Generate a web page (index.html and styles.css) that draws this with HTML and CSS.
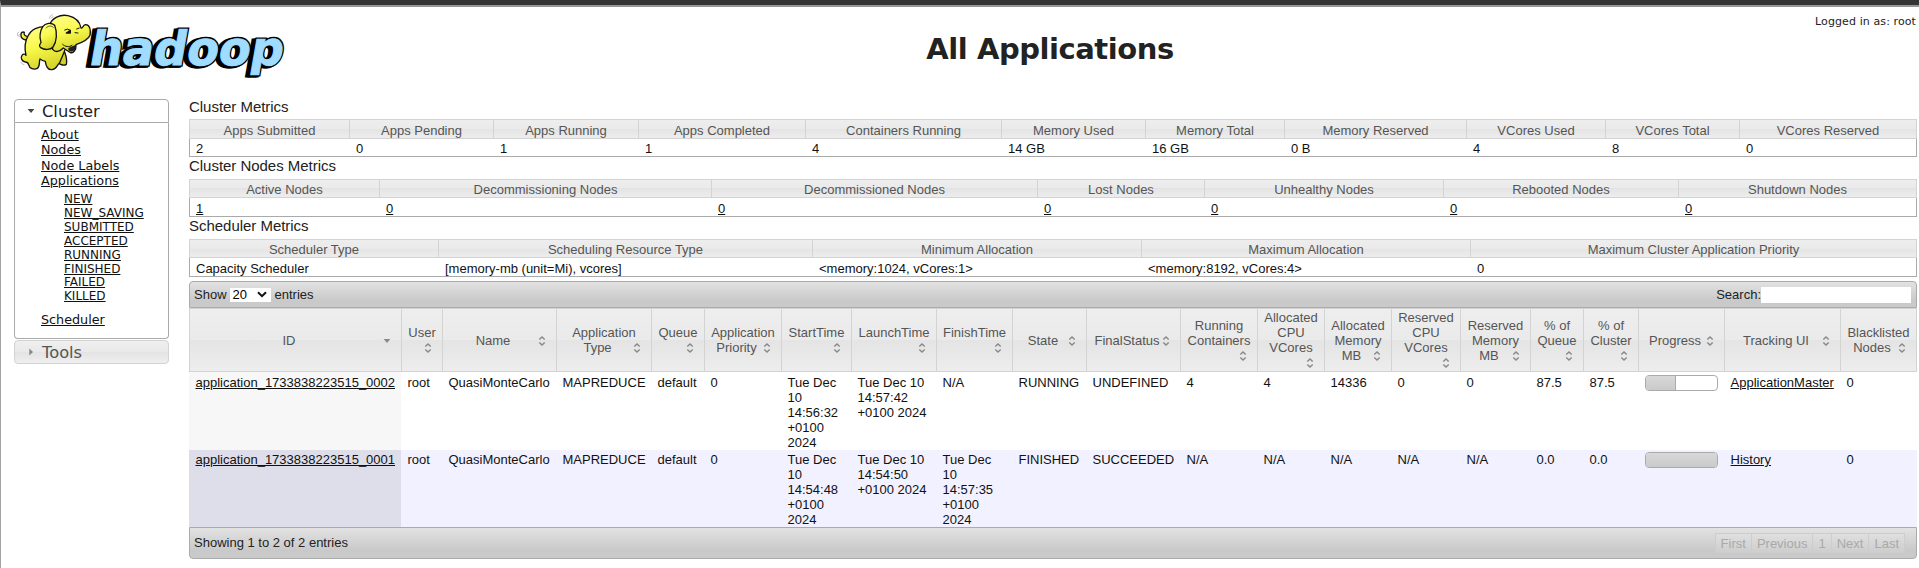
FILE: index.html
```html
<!DOCTYPE html>
<html lang="en">
<head>
<meta charset="utf-8">
<title>All Applications</title>
<link rel="stylesheet" href="styles.css">
</head>
<body>
<svg class="defs" width="0" height="0" aria-hidden="true">
  <symbol id="sort-both" viewBox="0 0 16 16"><path d="M5.3 6.5 8 3.9l2.7 2.6M5.3 9.5 8 12.1l2.7-2.6" fill="none" stroke="#888" stroke-width="1.4"/></symbol>
  <symbol id="sort-desc" viewBox="0 0 16 16"><path d="M4.7 6h6.6L8 10z" fill="#888"/></symbol>
</svg>
<div class="page">
<header class="header">
  <svg class="logo" viewBox="30 30 840 216" width="280" height="72" role="img" aria-label="Hadoop">
    <defs>
      <linearGradient id="skin" x1="0" y1="0" x2="0.3" y2="1"><stop offset="0" stop-color="#ffff8c"/><stop offset=".55" stop-color="#f8f84c"/><stop offset="1" stop-color="#d8d62c"/></linearGradient>
    </defs>
    <g class="wordmark" transform="translate(263 196) skewX(-10)">
      <text class="wm-shadow" x="-11" y="3" textLength="582" lengthAdjust="spacingAndGlyphs">hadoop</text>
      <text class="wm-shadow" x="-5" y="1" textLength="582" lengthAdjust="spacingAndGlyphs">hadoop</text>
      <text class="wm-shadow" x="0" y="0" textLength="582" lengthAdjust="spacingAndGlyphs">hadoop</text>
      <text class="wm-face" x="0" y="0" textLength="582" lengthAdjust="spacingAndGlyphs">hadoop</text>
    </g>
    <g fill="url(#skin)" stroke="#111" stroke-width="4" stroke-linejoin="round" stroke-linecap="round">
      <path d="M80 120C70 120 61 113 63 104C62 98 68 94 73 97C70 104 75 108 84 110Z"/>
      <path d="M170 185C178 194 192 198 199 193C202 182 199 170 194 156L165 160Z" fill="#d2cf28"/>
      <path d="M84 108C93 88 115 78 140 80L198 140C192 160 184 176 178 190C170 196 169 208 156 209C144 210 138 200 136 184C130 183 124 180 120 177C116 188 121 200 112 205C102 210 88 206 86 194C84 188 82 186 76 186C66 184 60 174 66 166C70 161 75 162 78 166C74 148 74 125 84 108Z"/>
      <path d="M148 76C156 54 180 42 204 47C226 52 240 66 243 84C250 86 246 77 256 74C270 73 273 92 270 106C264 121 246 128 228 134C229 150 220 162 210 157C203 154 198 148 190 144C178 156 166 158 158 148Z"/>
      <path d="M128 80C120 94 118 112 123 128C118 134 117 139 122 143C134 151 152 150 159 141C171 124 172 98 164 76C154 66 136 69 128 80Z"/>
      <path d="M207 144L227 136C228 150 217 158 207 151Z" fill="#222" stroke-width="2"/>
      <path d="M188 133C195 140 207 143 216 136M194 90Q202 84 210 90M230 87L238 84M225 98L234 99" fill="none" stroke-width="3"/>
      <path d="M199 99L211 91V99Z" fill="#111"/>
      <path d="M138 84C144 77 154 76 160 82" fill="none" stroke-width="2"/>
      <path d="M148 54Q150 46 157 44M153 55Q155 51 159 50M52 107Q50 100 56 96M57 111Q55 106 58 103M62 187Q66 193 72 194" fill="none" stroke="#999" stroke-width="2"/>
    </g>
  </svg>
  <h1 class="title">All Applications</h1>
  <div class="user">Logged in as: root</div>
</header>
<div class="columns">
<nav class="sidebar">
  <h3 class="acc acc-open"><svg width="16" height="16" viewBox="0 0 16 16"><path d="M4.6 6h6.8L8 10z" fill="#454545"/></svg>Cluster</h3>
  <div class="panel">
    <ul class="links">
      <li><a>About</a></li><li><a>Nodes</a></li><li><a>Node Labels</a></li>
      <li><a>Applications</a>
        <ul class="sublinks">
          <li><a>NEW</a></li><li><a>NEW_SAVING</a></li><li><a>SUBMITTED</a></li><li><a>ACCEPTED</a></li><li><a>RUNNING</a></li><li><a>FINISHED</a></li><li><a>FAILED</a></li><li><a>KILLED</a></li>
        </ul>
      </li>
      <li><a>Scheduler</a></li>
    </ul>
  </div>
  <h3 class="acc acc-closed"><svg width="16" height="16" viewBox="0 0 16 16"><path d="M6.3 4.6v6.8L10 8z" fill="#888"/></svg>Tools</h3>
</nav>
<main class="content">
  <h2 class="caption caption-first">Cluster Metrics</h2>
  <table class="metrics metrics-first">
    <colgroup><col style="width:160px"><col style="width:144px"><col style="width:145px"><col style="width:167px"><col style="width:196px"><col style="width:144px"><col style="width:139px"><col style="width:182px"><col style="width:139px"><col style="width:134px"><col style="width:178px"></colgroup>
    <thead><tr><th>Apps Submitted</th><th>Apps Pending</th><th>Apps Running</th><th>Apps Completed</th><th>Containers Running</th><th>Memory Used</th><th>Memory Total</th><th>Memory Reserved</th><th>VCores Used</th><th>VCores Total</th><th>VCores Reserved</th></tr></thead>
    <tbody><tr><td>2</td><td>0</td><td>1</td><td>1</td><td>4</td><td>14 GB</td><td>16 GB</td><td>0 B</td><td>4</td><td>8</td><td>0</td></tr></tbody>
  </table>
  <h2 class="caption">Cluster Nodes Metrics</h2>
  <table class="metrics">
    <colgroup><col style="width:190px"><col style="width:332px"><col style="width:326px"><col style="width:167px"><col style="width:239px"><col style="width:235px"><col style="width:239px"></colgroup>
    <thead><tr><th>Active Nodes</th><th>Decommissioning Nodes</th><th>Decommissioned Nodes</th><th>Lost Nodes</th><th>Unhealthy Nodes</th><th>Rebooted Nodes</th><th>Shutdown Nodes</th></tr></thead>
    <tbody><tr><td><a>1</a></td><td><a>0</a></td><td><a>0</a></td><td><a>0</a></td><td><a>0</a></td><td><a>0</a></td><td><a>0</a></td></tr></tbody>
  </table>
  <h2 class="caption">Scheduler Metrics</h2>
  <table class="metrics">
    <colgroup><col style="width:249px"><col style="width:374px"><col style="width:329px"><col style="width:329px"><col style="width:447px"></colgroup>
    <thead><tr><th>Scheduler Type</th><th>Scheduling Resource Type</th><th>Minimum Allocation</th><th>Maximum Allocation</th><th>Maximum Cluster Application Priority</th></tr></thead>
    <tbody><tr><td>Capacity Scheduler</td><td>[memory-mb (unit=Mi), vcores]</td><td>&lt;memory:1024, vCores:1&gt;</td><td>&lt;memory:8192, vCores:4&gt;</td><td>0</td></tr></tbody>
  </table>
  <div class="bar bar-top">
    <div class="length">Show <span class="select">20<svg width="10" height="7" viewBox="0 0 10 7"><path d="M1 1.2 5 5.2 9 1.2" fill="none" stroke="#111" stroke-width="2"/></svg></span> entries</div>
    <div class="search">Search:<input type="text" aria-label="Search"></div>
  </div>
  <table class="apps">
    <colgroup><col style="width:212px"><col style="width:41px"><col style="width:114px"><col style="width:95px"><col style="width:53px"><col style="width:77px"><col style="width:70px"><col style="width:85px"><col style="width:76px"><col style="width:74px"><col style="width:94px"><col style="width:77px"><col style="width:67px"><col style="width:67px"><col style="width:69px"><col style="width:70px"><col style="width:53px"><col style="width:55px"><col style="width:86px"><col style="width:116px"><col style="width:77px"></colgroup>
    <thead><tr>
      <th>ID<svg class="sort"><use href="#sort-desc"/></svg></th>
      <th>User<svg class="sort"><use href="#sort-both"/></svg></th>
      <th>Name<svg class="sort"><use href="#sort-both"/></svg></th>
      <th>Application<br>Type<svg class="sort"><use href="#sort-both"/></svg></th>
      <th>Queue<svg class="sort"><use href="#sort-both"/></svg></th>
      <th>Application<br>Priority<svg class="sort"><use href="#sort-both"/></svg></th>
      <th>StartTime<svg class="sort"><use href="#sort-both"/></svg></th>
      <th>LaunchTime<svg class="sort"><use href="#sort-both"/></svg></th>
      <th>FinishTime<svg class="sort"><use href="#sort-both"/></svg></th>
      <th>State<svg class="sort"><use href="#sort-both"/></svg></th>
      <th>FinalStatus<svg class="sort"><use href="#sort-both"/></svg></th>
      <th>Running<br>Containers<svg class="sort"><use href="#sort-both"/></svg></th>
      <th>Allocated<br>CPU<br>VCores<svg class="sort"><use href="#sort-both"/></svg></th>
      <th>Allocated<br>Memory<br>MB<svg class="sort"><use href="#sort-both"/></svg></th>
      <th>Reserved<br>CPU<br>VCores<svg class="sort"><use href="#sort-both"/></svg></th>
      <th>Reserved<br>Memory<br>MB<svg class="sort"><use href="#sort-both"/></svg></th>
      <th>% of<br>Queue<svg class="sort"><use href="#sort-both"/></svg></th>
      <th>% of<br>Cluster<svg class="sort"><use href="#sort-both"/></svg></th>
      <th>Progress<svg class="sort"><use href="#sort-both"/></svg></th>
      <th>Tracking UI<svg class="sort"><use href="#sort-both"/></svg></th>
      <th>Blacklisted<br>Nodes<svg class="sort"><use href="#sort-both"/></svg></th>
    </tr></thead>
    <tbody>
      <tr class="odd"><td class="sorted"><a>application_1733838223515_0002</a></td><td>root</td><td>QuasiMonteCarlo</td><td>MAPREDUCE</td><td>default</td><td>0</td><td>Tue Dec<br>10<br>14:56:32<br>+0100<br>2024</td><td>Tue Dec 10<br>14:57:42<br>+0100 2024</td><td>N/A</td><td>RUNNING</td><td>UNDEFINED</td><td>4</td><td>4</td><td>14336</td><td>0</td><td>0</td><td>87.5</td><td>87.5</td><td><div class="progress"><div class="progress-fill" style="width:43%"></div></div></td><td><a>ApplicationMaster</a></td><td>0</td></tr>
      <tr class="even"><td class="sorted"><a>application_1733838223515_0001</a></td><td>root</td><td>QuasiMonteCarlo</td><td>MAPREDUCE</td><td>default</td><td>0</td><td>Tue Dec<br>10<br>14:54:48<br>+0100<br>2024</td><td>Tue Dec 10<br>14:54:50<br>+0100 2024</td><td>Tue Dec<br>10<br>14:57:35<br>+0100<br>2024</td><td>FINISHED</td><td>SUCCEEDED</td><td>N/A</td><td>N/A</td><td>N/A</td><td>N/A</td><td>N/A</td><td>0.0</td><td>0.0</td><td><div class="progress"><div class="progress-fill full" style="width:100%"></div></div></td><td><a>History</a></td><td>0</td></tr>
    </tbody>
  </table>
  <div class="bar bar-bottom">
    <div class="info">Showing 1 to 2 of 2 entries</div>
    <div class="pager"><span>First</span><span>Previous</span><span>1</span><span>Next</span><span>Last</span></div>
  </div>
</main>
</div>
</div>
</body>
</html>
```
FILE: styles.css
```css
* { box-sizing: border-box; }
html, body { margin: 0; padding: 0; }
body {
  background: #fff;
  color: #222;
  font-family: "DejaVu Sans", sans-serif;
  overflow: hidden;
}
.defs { display: block; }
.page {
  height: 568px;
  padding-top: 5px;
  border-left: 1px solid #a3a3a3;
  border-top: 5px solid #343434;
  box-shadow: inset 0 2px 0 #9a9696;
}
a { color: #111; text-decoration: underline; }

/* header */
.header { display: flex; height: 88px; padding: 0 3px 0 9px; }
.logo { flex: none; width: 280px; height: 72px; overflow: visible; }
.wordmark text { font: bold 141px "DejaVu Sans", sans-serif; stroke-linejoin: miter; }
.wm-shadow { fill: #000; stroke: #000; stroke-width: 11px; }
.wm-face { fill: #9fdcff; stroke: #9fdcff; stroke-width: 3px; }
.title {
  flex: 1;
  margin: 0 -11px 0 -7px;
  padding: 19px 0 0;
  text-align: center;
  font-size: 29px;
  line-height: 40px;
  letter-spacing: -0.45px;
}
.user { width: 110px; padding-top: 5px; text-align: right; font-size: 11px; line-height: 14px; letter-spacing: 0.1px; white-space: nowrap; }

.columns { display: flex; align-items: flex-start; padding-left: 13px; }

/* sidebar accordion */
.sidebar { width: 155px; flex: none; padding-top: 1px; }
.acc {
  display: flex;
  align-items: center;
  gap: 3px;
  margin: 0;
  padding-left: 8px;
  height: 24px;
  border: 1px solid #aaa;
  font-size: 16.3px;
  font-weight: normal;
}
.acc-open { border-radius: 4px 4px 0 0; color: #212121; }
.acc-closed {
  margin-top: 1px;
  border-color: #d3d3d3;
  border-radius: 4px;
  color: #555;
  background: linear-gradient(#efefef, #e9e9e9 50%, #e3e3e3 50%, #efefef);
}
.panel { height: 216px; padding: 4px 0 0 26px; border: 1px solid #aaa; border-top: 0; border-radius: 0 0 4px 4px; }
.links, .sublinks { list-style: none; margin: 0; padding: 0; }
.links { font-size: 12.75px; line-height: 15.35px; }
.sublinks { padding: 5px 0 7.5px 23px; font-size: 12px; line-height: 13.85px; }
.sidebar li { white-space: nowrap; }

/* content */
.content {
  width: 1728px;
  margin-left: 20px;
  flex: none;
  font: 13px/15px "Liberation Sans", Arial, sans-serif;
}
.caption { margin: 0 0 5px; font-size: 15px; line-height: 17px; font-weight: normal; letter-spacing: -0.03px; }
.caption-first { margin-bottom: 4px; }
table { width: 1728px; table-layout: fixed; border-collapse: separate; border-spacing: 0; }
th {
  font-weight: normal;
  color: #555;
  text-align: center;
  border: 1px solid #d3d3d3;
  border-right: 0;
  background: linear-gradient(#eeeeee, #eaeaea 50%, #e4e4e4 50%, #ededed);
}
th:last-child { border-right: 1px solid #d3d3d3; }
td { color: #111; white-space: nowrap; vertical-align: top; }
.metrics th { height: 19px; padding: 2px 0 0; vertical-align: top; }
.metrics td { height: 19px; padding: 3px 0 0 7px; border-bottom: 1px solid #aaa; }
.metrics td:first-child { border-left: 1px solid #aaa; padding-left: 6px; }
.metrics td:last-child { border-right: 1px solid #aaa; }
.metrics-first th { height: 20px; padding-top: 3px; }
.metrics-first td { height: 18px; padding-top: 2px; }

.bar {
  display: flex;
  justify-content: space-between;
  align-items: center;
  border: 1px solid #aaa;
  background: linear-gradient(#e2e2e2, #c9c9c9 75%, #cacaca);
}
.bar-top { height: 27px; margin-top: 4px; padding: 0 5px 0 4px; border-radius: 4px 4px 0 0; }
.length, .search { display: flex; align-items: center; color: #222; }
.select { display: flex; align-items: center; justify-content: space-between; width: 41px; height: 14px; margin: 0 4px 0 3px; padding: 0 4px 0 3px; background: #fff; color: #000; }
.search input { width: 150px; height: 16px; padding: 0; border: 0; background: #fff; }

.apps th { height: 64px; padding: 1px 6px 0; white-space: nowrap; vertical-align: middle; }
.sort { float: right; width: 16px; height: 16px; margin-left: -3px; }
.apps td { height: 78px; padding: 3px 0 0 6.5px; }
.apps .even td { height: 77px; padding-top: 2px; }
.odd .sorted { background: #f7f7f7; }
.even td { background: #f1f1ff; }
.even .sorted { background: #dedeea; }
.progress { width: 73px; height: 16px; border: 1px solid #aaa; border-radius: 4px; background: #fff; overflow: hidden; }
.progress-fill { height: 14px; border-right: 1px solid #aaa; background: linear-gradient(#d8d8d8, #cacaca); }
.progress-fill.full { border-right: 0; }

.bar-bottom { height: 32px; padding: 0 11px 1px 4px; border-radius: 0 0 4px 4px; }
.pager { display: flex; color: #a9a9a9; }
.pager span { height: 20px; padding: 1px 5px 0; line-height: 17px; border: 1px solid #cdcdcd; margin-left: -1px; background: rgba(255, 255, 255, 0.12); }
```
